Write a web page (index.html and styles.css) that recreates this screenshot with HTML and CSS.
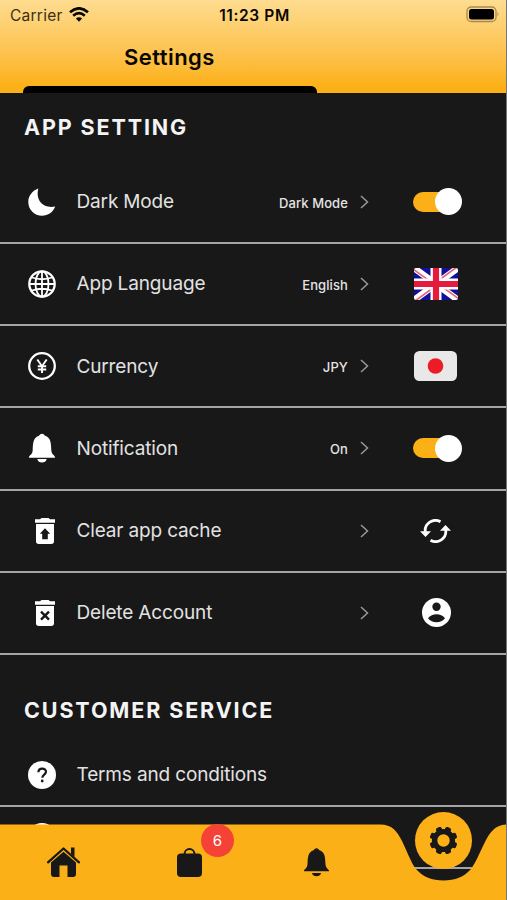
FILE: index.html
```html
<!DOCTYPE html>
<html lang="en">
<head>
<meta charset="utf-8">
<title>Settings</title>
<link rel="stylesheet" href="styles.css">
</head>
<body>
<div class="phone">
  <header class="header">
    <div class="status">
      <div class="carrier"><span>Carrier</span>
        <svg width="20" height="15" viewBox="0 0 20 15"><g fill="none" stroke="#080600" stroke-width="2.6"><path d="M1 5.3Q10-2.7 19 5.3"/><path d="M4.2 8.8Q10 3.5 15.8 8.8"/></g><path d="M6.9 11.6Q10 8.7 13.1 11.6L10 14.8z" fill="#080600"/></svg>
      </div>
      <div class="clock">11:23 PM</div>
      <svg class="battery" width="34" height="17" viewBox="0 0 34 17"><rect x="1" y="1" width="29" height="14.5" rx="4.3" fill="none" stroke="#a78a4e" stroke-width="1.3"/><rect x="3" y="3" width="25" height="10.5" rx="2.5"/><path d="M31.5 6q2 2.2 0 4.5z" fill="#a78a4e"/></svg>
    </div>
    <h1 class="title">Settings</h1>
    <div class="tab"></div>
  </header>
  <main class="content">
    <h2 class="section">APP SETTING</h2>
    <div class="row">
      <svg class="icon" viewBox="0 0 28 28"><path d="M10.300.6C4.500 2.600.3 8 .3 13.900.3 21.700 6.500 27.700 14 27.700c6 0 11.200-3.500 13.200-9.200C17.500 20.800 7 14.500 10.300.6z" fill="#fff"/></svg>
      <span class="label">Dark Mode</span><span class="value">Dark Mode</span>
      <svg class="chevron" viewBox="0 0 9 14"><path d="M1 1l6.500 6L1 13"/></svg>
      <div class="end"><div class="toggle"><i></i></div></div>
    </div>
    <div class="row">
      <svg class="icon" viewBox="0 0 28 28"><g fill="none" stroke="#fff" stroke-width="1.800"><circle cx="14" cy="14" r="12.700" stroke-width="2.300"/><ellipse cx="14" cy="14" rx="6.500" ry="12.700"/><path d="M14 1v26M1 14h26M4 7.500Q14 11 24 7.500M4 20.500Q14 17 24 20.500"/></g></svg>
      <span class="label">App Language</span><span class="value">English</span>
      <svg class="chevron" viewBox="0 0 9 14"><path d="M1 1l6.500 6L1 13"/></svg>
      <div class="end"><svg class="flag" width="44" height="32" viewBox="0 0 44 32"><path fill="#10109b" d="M0 0h44v32H0z"/><path d="M0 0l44 32M44 0L0 32" stroke="#fff" stroke-width="6.500"/><path d="M-1 1l20 14.500M45 31L25 16.500M43-1L23 13.500M1 33l20-14.500" stroke="#e4687c" stroke-width="1.700"/><path d="M22 0v32M0 16h44" stroke="#fff" stroke-width="11"/><path d="M22 0v32M0 16h44" stroke="#e51b3e" stroke-width="6.200"/></svg></div>
    </div>
    <div class="row">
      <svg class="icon" viewBox="0 0 28 28"><g fill="none" stroke="#fff"><circle cx="14" cy="14" r="12.800" stroke-width="2.300"/><path stroke-width="1.900" d="M9.300 7.500L14 14.200l4.700-6.700M14 14v7M9.800 14.300h8.400M9.800 17.500h8.400"/></g></svg>
      <span class="label">Currency</span><span class="value">JPY</span>
      <svg class="chevron" viewBox="0 0 9 14"><path d="M1 1l6.500 6L1 13"/></svg>
      <div class="end"><svg class="japan" width="43" height="30" viewBox="0 0 43 30"><rect width="43" height="30" rx="5.500" fill="#e9e8e9"/><circle cx="21.500" cy="15" r="7.800" fill="#ed1c24"/></svg></div>
    </div>
    <div class="row">
      <svg class="icon bell" viewBox="0 0 28 30"><path d="M1 24.700C.7 22 4.500 22.300 4.700 17 5 9.500 5.300 4.700 11 2.800 12.500-.1 15.500-.1 17 2.800c5.700 1.900 6 6.700 6.300 14.200.2 5.300 4 5 3.700 7.700zM9.300 26h9.400c-.7 4.800-8.700 4.800-9.400 0z" fill="#fff"/></svg>
      <span class="label">Notification</span><span class="value">On</span>
      <svg class="chevron" viewBox="0 0 9 14"><path d="M1 1l6.500 6L1 13"/></svg>
      <div class="end"><div class="toggle"><i></i></div></div>
    </div>
    <div class="row">
      <svg class="icon trash" viewBox="0 0 20 26"><path d="M5 1.300L6.500 0h7L15 1.300h5v3.400H0V1.300zM1 6h18v17.300c0 2-1 2.700-2.700 2.700H3.700C2 26 1 25.300 1 23.300z" fill="#fff"/><path d="M10 10.200l5.200 5.500h-2.400v5.500H7.200v-5.500H4.800z" fill="#181818"/></svg>
      <span class="label">Clear app cache</span><span class="value"></span>
      <svg class="chevron" viewBox="0 0 9 14"><path d="M1 1l6.500 6L1 13"/></svg>
      <div class="end"><svg class="sync" width="31" height="24" viewBox="0 0 31 24"><g fill="none" stroke="#fff" stroke-width="2.800"><path d="M20.500 2.800A10.200 10.200 0 0 0 5.300 13M10.500 21.200A10.200 10.200 0 0 0 25.700 11"/></g><path d="M0 12.300h11L5.500 18zM20 11.700h11L25.500 6z" fill="#fff"/></svg></div>
    </div>
    <div class="row">
      <svg class="icon trash" viewBox="0 0 20 26"><path d="M5 1.300L6.500 0h7L15 1.300h5v3.400H0V1.300zM1 6h18v17.300c0 2-1 2.700-2.700 2.700H3.700C2 26 1 25.300 1 23.300z" fill="#fff"/><path d="M6 11.700l8 8M14 11.700l-8 8" stroke="#181818" stroke-width="2.400"/></svg>
      <span class="label">Delete Account</span><span class="value"></span>
      <svg class="chevron" viewBox="0 0 9 14"><path d="M1 1l6.500 6L1 13"/></svg>
      <div class="end"><svg class="user" width="29" height="29" viewBox="0 0 29 29"><circle cx="14.500" cy="14.500" r="14.500" fill="#fff"/><circle cx="14.500" cy="8.800" r="4.200" fill="#181818"/><path d="M6 20.300c4-5.300 13-5.300 17 0-4 5.300-13 5.300-17 0z" fill="#181818"/></svg></div>
    </div>
    <h2 class="section service">CUSTOMER SERVICE</h2>
    <div class="row terms">
      <svg class="icon" viewBox="0 0 28 28"><circle cx="14" cy="14" r="14" fill="#fff"/><path d="M10.400 11.300c0-5 7.600-4.800 7.600-.7 0 3.200-3.700 2.800-3.700 6.200" fill="none" stroke="#181818" stroke-width="2.200"/><circle cx="14.200" cy="20" r="1.400" fill="#181818"/></svg>
      <span class="label">Terms and conditions</span>
    </div>
    <div class="row next">
      <svg class="icon" viewBox="0 0 28 28"><circle cx="14" cy="14" r="14" fill="#fff"/></svg>
    </div>
  </main>
  <nav class="nav">
    <svg class="navshape" width="507" height="90" viewBox="0 0 507 90"><path d="M0 14.500H380C392 14.500 397 21 402 31 409 46 412 54 416 59 423 67 432 70.500 443.500 70.500S464 67 471 59C475 54 480 42 485 32 490 22 495 15 507 14.500V90H0z" fill="#fcb017"/></svg>
    <div class="tabs">
      <div class="cell"><svg width="33" height="30" viewBox="0 0 33 30" fill="#181818"><path d="M1 15.300L16.500 1.500 32 15.300" fill="none" stroke="#181818" stroke-width="2.300" stroke-linecap="round" stroke-linejoin="round"/><path d="M24 .5h3.500v9.500L24 7zM4 15.500L16.500 4.800 29 15.500V27q0 3-3 3h-5.500V18.500h-8V30H7q-3 0-3-3z"/></svg></div>
      <div class="cell"><svg width="25" height="29" viewBox="0 0 25 29"><path d="M7.500 6.500C7.500-.7 17.500-.7 17.500 6.500" fill="none" stroke="#181818" stroke-width="2"/><rect y="5.500" width="25" height="23.500" rx="4" fill="#181818"/></svg><span class="badge">6</span></div>
      <div class="cell"><svg width="27" height="30" viewBox="0 0 28 30"><path d="M1 24.700C.7 22 4.500 22.300 4.700 17 5 9.500 5.300 4.700 11 2.800 12.500-.1 15.500-.1 17 2.800c5.700 1.900 6 6.700 6.300 14.200.2 5.300 4 5 3.700 7.700zM9.300 26.300h9.400c-.7 4.500-8.700 4.500-9.400 0z" fill="#181818"/></svg></div>
      <div class="cell active"><div class="bubble"><svg width="29" height="29" viewBox="-14.500 -14.500 29 29"><g fill="none" stroke="#181818"><circle r="8.900" stroke-width="5.400"/></g><g fill="#181818"><rect id="t" x="-3" y="-14" width="6" height="6" rx="1.800" transform="rotate(22.500)"/><use href="#t" transform="rotate(45)"/><use href="#t" transform="rotate(90)"/><use href="#t" transform="rotate(135)"/><use href="#t" transform="rotate(180)"/><use href="#t" transform="rotate(225)"/><use href="#t" transform="rotate(270)"/><use href="#t" transform="rotate(315)"/></g></svg></div></div>
    </div>
  </nav>
</div>
</body>
</html>
```
FILE: styles.css
```css
* { box-sizing: border-box; }
body { margin: 0; font-family: Inter, "Liberation Sans", sans-serif; background: #181818; }
svg { display: block; flex: none; }
.phone { position: relative; width: 507px; height: 900px; overflow: hidden; background: #181818; border-right: 1px solid #777; }
.header { height: 93px; display: flex; flex-direction: column; background: linear-gradient(#fedc90, #fdc14a 60%, #fcb017 94%); color: #080600; }
.status { height: 30px; display: grid; grid-template-columns: 1fr auto 1fr; align-items: center; padding: 0 7px 0 10px; }
.carrier { display: flex; align-items: center; gap: 6px; font-size: 15.500px; letter-spacing: .25px; color: #3b3017; }
.carrier svg { margin-top: -1px; }
.clock { margin: 0; font-size: 15.500px; font-weight: 600; letter-spacing: .6px; }
.battery { justify-self: end; margin: -2px -1px 0 0; }
.title { margin: 12px 0 0 124px; font-size: 22px; line-height: 30px; font-weight: 600; letter-spacing: .45px; }
.tab { width: 294px; height: 7px; margin: auto 0 0 22.500px; background: #000; border-radius: 6px 6px 0 0; }
.content { display: flex; flex-direction: column; }
.section { margin: 0; height: 68.500px; padding: 20px 24px 0; font-size: 21.500px; line-height: 28px; font-weight: 700; letter-spacing: 1.880px; color: #f4f4f4; }
.row { flex: none; height: 82.250px; display: flex; align-items: center; padding: 0 0 0 27.500px; border-bottom: 2px solid #a5a5a5; }
.icon { width: 28px; height: 28px; }
.icon.bell { height: 30px; }
.icon.trash { width: 20px; height: 26px; margin: 0 1px 0 7px; }
.label { margin-left: 21px; font-size: 19px; letter-spacing: -.15px; color: #e2e2e2; white-space: nowrap; }
.value { margin-left: auto; padding-top: 2px; font-size: 13px; font-weight: 500; letter-spacing: .1px; color: #e4e4e4; }
.chevron { width: 9px; height: 14px; margin-left: 11.500px; fill: none; stroke: #999; stroke-width: 1.500; }
.end { width: 93px; height: 32px; margin: 0 44.500px 0 0; display: flex; align-items: center; justify-content: flex-end; }
.toggle { position: relative; width: 49px; height: 27px; display: flex; align-items: center; justify-content: flex-end; }
.toggle::before { content: ""; width: 40px; height: 20px; margin-right: -18px; border-radius: 10px; background: #fcb017; flex: none; }
.toggle i { position: relative; flex: none; width: 27px; height: 27px; border-radius: 50%; background: #fff; }
.flag { margin-right: 4px; border-radius: 2px; }
.japan { margin-right: 5px; }
.sync, .user { margin-right: 11px; }
.service { height: 88.500px; padding-top: 41px; }
.terms { height: 63.500px; padding-top: 1px; }
.next { height: 62px; }
.nav { position: absolute; left: 0; right: 0; bottom: 0; height: 90px; }
.tabs { position: relative; height: 90px; display: grid; grid-template-columns: repeat(4, 126.500px); padding-top: 14px; }
.navshape { position: absolute; left: 0; top: 0; }
.cell { position: relative; display: flex; align-items: center; justify-content: center; }
.badge { position: absolute; left: 74.500px; top: 0; width: 33px; height: 33px; border-radius: 50%; background: #f44336; color: #fff; font-size: 15px; line-height: 33px; text-align: center; }
.active { align-items: flex-start; }
.bubble { width: 57px; height: 57px; margin: -12px 0 0 1px; border-radius: 50%; background: #fcb017; display: flex; align-items: center; justify-content: center; }
```
